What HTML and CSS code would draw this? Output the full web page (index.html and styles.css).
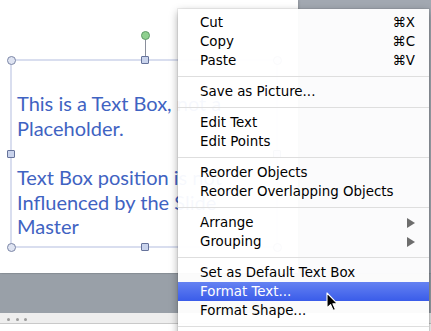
FILE: index.html
```html
<!DOCTYPE html>
<html>
<head>
<meta charset="utf-8">
<link rel="stylesheet" href="styles.css">
</head>
<body>
<div class="screen">
  <div class="workspace">
    <div class="slide">
      <div class="textbox">
        <span class="rot-line"></span>
        <span class="handle rot"></span>
        <span class="handle circle tl"></span>
        <span class="handle square tm"></span>
        <span class="handle circle tr"></span>
        <span class="handle square ml"></span>
        <span class="handle square mr"></span>
        <span class="handle circle bl"></span>
        <span class="handle square bm"></span>
        <span class="handle circle br"></span>
        <div class="tb-text">
          <p>This is a Text Box, not a<br>Placeholder.</p>
          <p class="p2">Text Box position is not<br>Influenced by the Slide<br>Master</p>
        </div>
      </div>
    </div>
    <div class="pasteboard"></div>
  </div>
  <div class="gutter"></div>
  <div class="statusbar"><span class="dot"></span><span class="dot"></span><span class="dot"></span></div>
  <div class="below"></div>

  <div class="menu">
    <div class="item"><span>Cut</span><span class="key">⌘X</span></div>
    <div class="item"><span>Copy</span><span class="key">⌘C</span></div>
    <div class="item"><span>Paste</span><span class="key">⌘V</span></div>
    <div class="sep"></div>
    <div class="item"><span>Save as Picture...</span></div>
    <div class="sep"></div>
    <div class="item"><span>Edit Text</span></div>
    <div class="item"><span>Edit Points</span></div>
    <div class="sep"></div>
    <div class="item"><span>Reorder Objects</span></div>
    <div class="item"><span>Reorder Overlapping Objects</span></div>
    <div class="sep"></div>
    <div class="item"><span>Arrange</span><span class="arrow"></span></div>
    <div class="item"><span>Grouping</span><span class="arrow"></span></div>
    <div class="sep"></div>
    <div class="item"><span>Set as Default Text Box</span></div>
    <div class="item active"><span>Format Text...</span></div>
    <div class="item"><span>Format Shape...</span></div>
    <div class="sep"></div>
    <div class="menu-tail"></div>
  </div>

  <svg class="cursor" width="13" height="20" viewBox="0 0 13 20">
    <path d="M1 1 L1 16 L4.6 12.6 L7.2 18.4 L9.4 17.4 L6.9 11.8 L11.6 11.8 Z" fill="#000" stroke="#fff" stroke-width="1.1" stroke-linejoin="round"/>
  </svg>
</div>
</body>
</html>
```
FILE: styles.css
```css
html, body {
  margin: 0;
  padding: 0;
}
body {
  width: 431px;
  height: 331px;
  overflow: hidden;
  background: #ffffff;
}
.screen {
  position: relative;
  width: 431px;
  height: 331px;
  display: flex;
  flex-direction: column;
  overflow: hidden;
}
.workspace {
  display: flex;
  height: 273px;
  flex: none;
}
.slide {
  position: relative;
  width: 298px;
  height: 273px;
  background: #ffffff;
  flex: none;
  box-shadow: 1px 0 2px rgba(0,0,0,0.15);
}
.pasteboard {
  flex: 1;
  background: #a2a8b1;
}
.gutter {
  height: 40px;
  flex: none;
  background: #99a0a8;
  border-top: 1px solid #8e959d;
  box-sizing: border-box;
}
.statusbar {
  height: 8px;
  flex: none;
  background: #eeeeee;
  border-bottom: 1px solid #c9c9c9;
  display: flex;
  align-items: center;
  gap: 5px;
  padding-left: 7px;
  padding-top: 2px;
  box-sizing: content-box;
}
.dot {
  width: 3px;
  height: 3px;
  border-radius: 50%;
  background: #9c9c9c;
  margin-right: 0.5px;
}
.below {
  flex: 1;
  background: #ffffff;
}

/* text box on slide canvas */
.textbox {
  position: absolute;
  left: 10px;
  top: 59px;
  width: 264px;
  height: 185px;
  border: 2px solid #d9deef;
}
.handle {
  position: absolute;
  box-sizing: border-box;
}
.circle {
  width: 9px;
  height: 9px;
  border-radius: 50%;
  background: #dfe4f2;
  border: 1px solid #7b86a6;
}
.square {
  width: 8px;
  height: 8px;
  border-radius: 1px;
  background: #c9d3ec;
  border: 1px solid #66739b;
}
.tl { left: -5.5px; top: -5.5px; }
.tr { right: -5.5px; top: -5.5px; }
.bl { left: -5.5px; bottom: -5.5px; }
.br { right: -5.5px; bottom: -5.5px; }
.tm { left: 129px; top: -5px; }
.bm { left: 129px; bottom: -5px; }
.ml { left: -5px; top: 89px; }
.mr { right: -5px; top: 89px; }
.rot {
  left: 128.5px;
  top: -30px;
  width: 9px;
  height: 9px;
  border-radius: 50%;
  background: #8fd08f;
  border: 1px solid #5f9a68;
}
.rot-line {
  position: absolute;
  left: 132.5px;
  top: -22px;
  width: 1px;
  height: 18px;
  background: #8a8f9c;
}
.tb-text {
  padding: 30px 0 0 5px;
  font-family: Lato, "Open Sans", sans-serif;
  font-size: 20px;
  line-height: 24.5px;
  color: #3f63c2;
  white-space: nowrap;
}
.tb-text p {
  margin: 0;
}
.tb-text .p2 {
  margin-top: 25px;
}

/* context menu overlay */
.menu {
  position: absolute;
  left: 178px;
  top: 9px;
  width: 251px;
  padding: 4px 0;
  background: rgba(255, 255, 255, 0.955);
  box-shadow: 0 3px 9px rgba(0, 0, 0, 0.35), 0 0 0 1px rgba(0,0,0,0.06);
  border-radius: 0 0 5px 5px;
  font-family: "DejaVu Sans", "Noto Sans", sans-serif;
  font-size: 13.4px;
  color: #000;
}
.item {
  height: 19px;
  line-height: 19px;
  padding: 0 14px 0 22px;
  display: flex;
  justify-content: space-between;
  align-items: center;
}
.item.active {
  background: linear-gradient(#6582f2, #3a5ce9);
  color: #ffffff;
}
.key {
  font-size: 13.4px;
}
.arrow {
  width: 0;
  height: 0;
  border-left: 8px solid #6d6d6d;
  border-top: 5px solid transparent;
  border-bottom: 5px solid transparent;
}
.sep {
  height: 12px;
  display: flex;
  align-items: center;
}
.sep::after {
  content: "";
  flex: 1;
  height: 1px;
  background: #dedede;
}
.menu-tail {
  height: 20px;
}
.cursor {
  position: absolute;
  left: 326px;
  top: 292px;
}
```
